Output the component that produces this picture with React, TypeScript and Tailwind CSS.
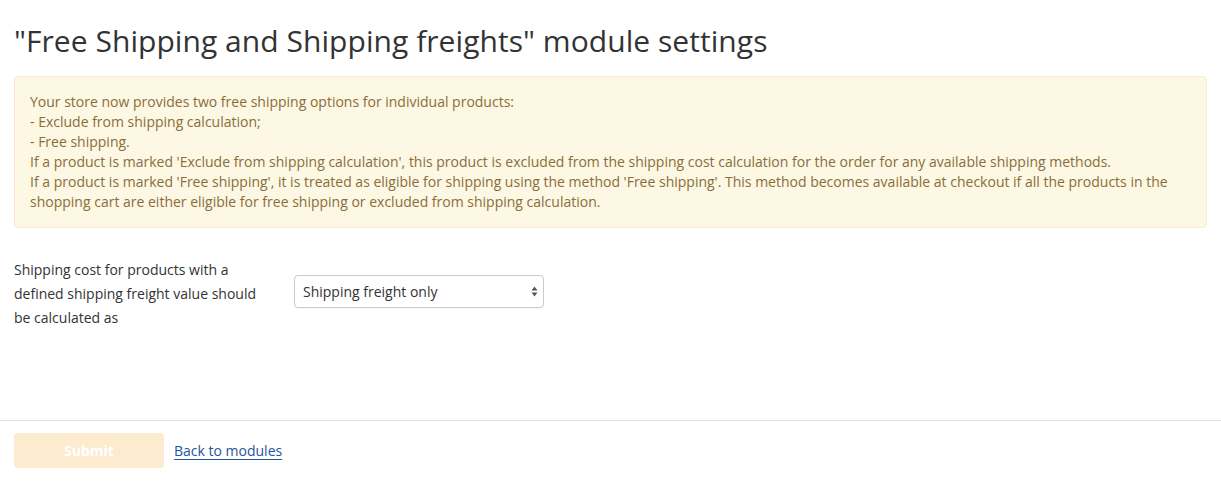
export default function App() {
  return (
    <div className="min-h-[503px] bg-white font-['Open_Sans',sans-serif] text-[#333]">
      <div className="px-[14px] pt-[23px]">
        <h1 className="text-[30px] leading-[36px] font-normal text-[#333] tracking-[0.05px]">
          "Free Shipping and Shipping freights" module settings
        </h1>

        {/* Notice */}
        <div className="mt-[17px] rounded-[4px] border border-[#faebcc] bg-[#fcf8e3] px-[15px] py-[15px] text-[14px] leading-[20px] text-[#8a6d3b]">
          <p>Your store now provides two free shipping options for individual products:</p>
          <p>- Exclude from shipping calculation;</p>
          <p>- Free shipping.</p>
          <p>
            If a product is marked 'Exclude from shipping calculation', this product is excluded from the shipping cost
            calculation for the order for any available shipping methods.
          </p>
          <p>
            If a product is marked 'Free shipping', it is treated as eligible for shipping using the method 'Free
            shipping'. This method becomes available at checkout if all the products in the shopping cart are either
            eligible for free shipping or excluded from shipping calculation.
          </p>
        </div>

        {/* Setting row */}
        <div className="mt-[30px] flex items-start">
          <label className="w-[250px] text-[14px] leading-[24px] text-[#333]">
            Shipping cost for products with a defined shipping freight value should be calculated as
          </label>
          <div className="relative ml-[30px] mt-[17px]">
            <select
              defaultValue="freight"
              className="h-[33px] w-[250px] appearance-none rounded-[4px] border border-[#ccc] bg-white pl-[8px] pr-[24px] text-[14px] text-[#333] shadow-[0_1px_1px_rgba(0,0,0,0.04)] outline-none"
            >
              <option value="freight">Shipping freight only</option>
              <option value="sum">Shipping freight + regular shipping cost</option>
            </select>
            <svg
              className="pointer-events-none absolute right-[6px] top-[11px]"
              width="7"
              height="11"
              viewBox="0 0 7 11"
            >
              <path d="M3.5 0.5 L6.5 4.5 L0.5 4.5 Z" fill="#555" />
              <path d="M3.5 10.5 L6.5 6.5 L0.5 6.5 Z" fill="#555" />
            </svg>
          </div>
        </div>
      </div>

      {/* Footer */}
      <div className="mt-[90px] flex items-center border-t border-[#ddd] px-[14px] pt-[12px]">
        <button
          disabled
          className="h-[35px] w-[150px] rounded-[4px] bg-[#fdebcf] text-[14px] font-bold text-white"
        >
          Submit
        </button>
        <a href="#" className="ml-[10px] text-[14px] text-[#2754a0] underline underline-offset-[3px]">
          Back to modules
        </a>
      </div>
    </div>
  );
}
